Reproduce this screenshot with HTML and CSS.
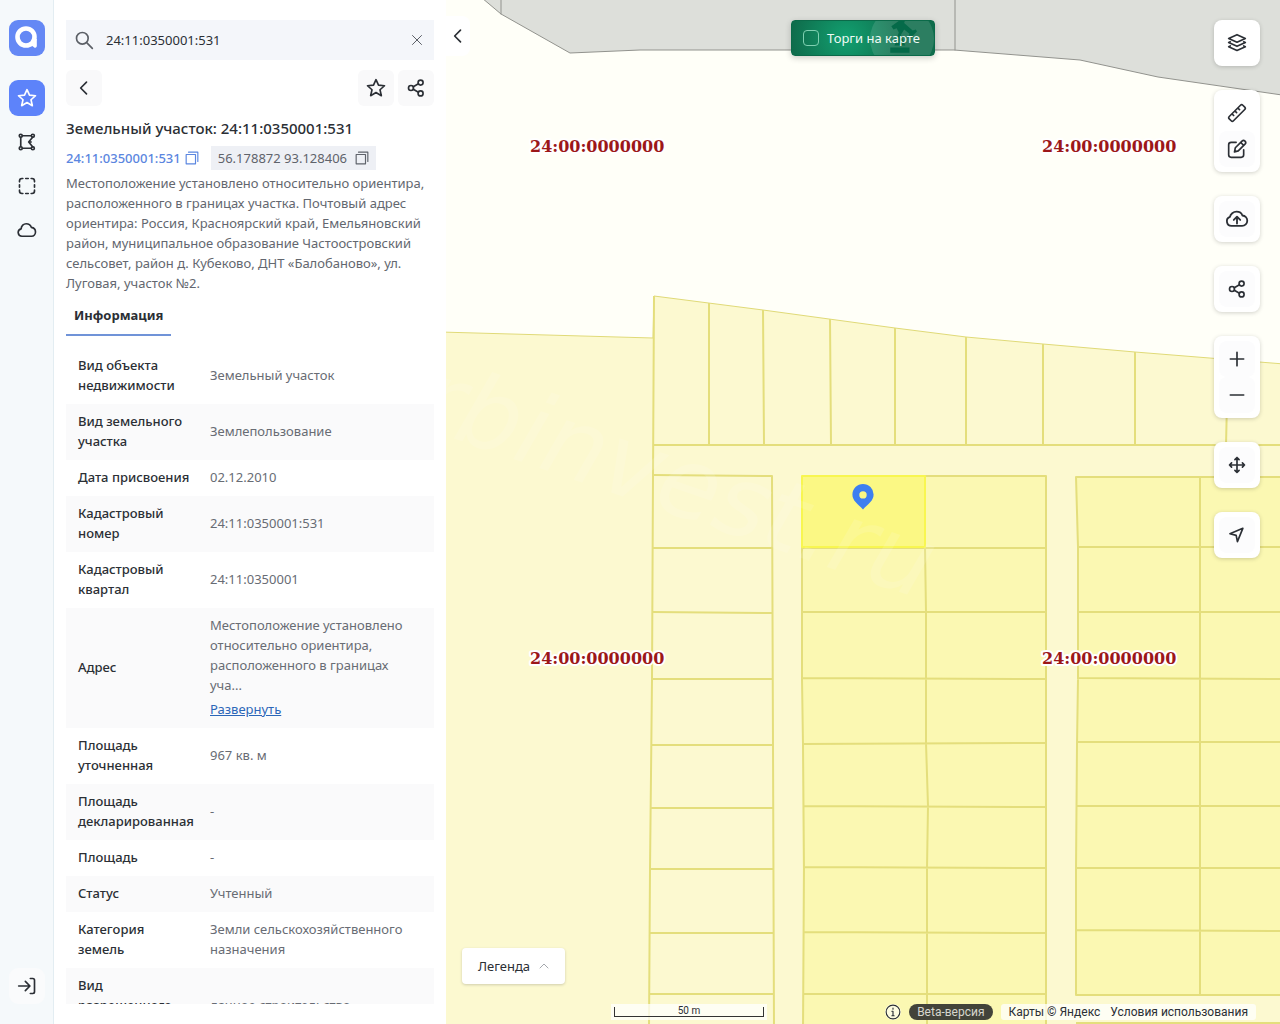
FILE: index.html
```html
<!DOCTYPE html>
<html lang="ru">
<head>
<meta charset="utf-8">
<meta name="viewport" content="width=device-width, initial-scale=1">
<title>Земельный участок: 24:11:0350001:531</title>
<link rel="stylesheet" href="styles.css">
</head>
<body>
<svg class="symbols" aria-hidden="true">
  <symbol id="i-star" viewBox="0 0 24 24"><path d="M12 2l3 6.600 7.200.700-5.400 4.800 1.600 7.100L12 17.500l-6.400 3.700 1.600-7.100-5.400-4.800 7.200-.700z"/></symbol>
  <symbol id="i-share" viewBox="0 0 24 24"><circle cx="17.500" cy="5.500" r="3"/><circle cx="6" cy="12" r="3"/><circle cx="17.500" cy="18.500" r="3"/><path d="M8.700 10.500l6.200-3.600M8.700 13.500l6.200 3.600"/></symbol>
  <symbol id="i-left" viewBox="0 0 24 24"><path d="M15 5l-7 7 7 7"/></symbol>
  <symbol id="i-copy" viewBox="0 0 24 24"><path d="M2 6h16v16H2zM6 2h16v16"/></symbol>
</svg>

<nav class="rail" aria-label="Разделы">
  <a class="logo" href="#" aria-label="Главная">
    <svg viewBox="0 0 36 36"><circle cx="17" cy="17" r="8.500" fill="none" stroke="#fff" stroke-width="4.600"/><path d="M23 19h4.800v6.800c0 1.400-.8 2-2.200 2L22 25z" fill="#fff"/></svg>
  </a>
  <button class="rail-btn active" aria-label="Избранное"><svg class="icon"><use href="#i-star"/></svg></button>
  <button class="rail-btn" aria-label="Выделить область"><svg class="icon" viewBox="0 0 24 24"><path d="M6.500 4.500h10M4.500 6.500v11M6.500 19.500h10M19 6l-5 6 5 6M15 12h2"/><circle cx="4.500" cy="4.500" r="1.800"/><circle cx="19" cy="4.500" r="1.800"/><circle cx="4.500" cy="19.500" r="1.800"/><circle cx="19" cy="19.500" r="1.800"/></svg></button>
  <button class="rail-btn" aria-label="Рамка"><svg class="icon" viewBox="0 0 24 24"><path d="M3 7V6a3 3 0 0 1 3-3h1M17 3h1a3 3 0 0 1 3 3v1M21 17v1a3 3 0 0 1-3 3h-1M7 21H6a3 3 0 0 1-3-3v-1M10.500 3h3M10.500 21h3M3 10.500v3M21 10.500v3"/></svg></button>
  <button class="rail-btn" aria-label="Облако"><svg class="icon" viewBox="0 0 24 24"><path d="M6 19.500a4.500 4.500 0 0 1-1-8.900C5 7 8 4.500 11 4.500c3 0 5.300 1.700 6.200 4.300 2.800.4 5 2.700 5 5.600a5 5 0 0 1-4.700 5.100z"/></svg></button>
  <button class="rail-btn login" aria-label="Войти"><svg class="icon" viewBox="0 0 24 24"><path d="M2 12h13M10 6.500l5.500 5.500-5.500 5.500M16 3h3a2 2 0 0 1 2 2v14a2 2 0 0 1-2 2h-3"/></svg></button>
</nav>

<aside class="panel">
  <form class="search">
    <svg class="icon lens" viewBox="0 0 24 24"><circle cx="10" cy="10" r="7"/><path d="M15.500 15.500l6.500 6.500"/></svg>
    <input type="text" aria-label="Поиск" value="24:11:0350001:531">
    <button type="button" class="clear" aria-label="Очистить"><svg viewBox="0 0 12 12"><path d="M1.500 1.500l9 9M10.500 1.500l-9 9"/></svg></button>
  </form>
  <div class="actions">
    <button class="tile" aria-label="Назад"><svg class="icon"><use href="#i-left"/></svg></button>
    <button class="tile push" aria-label="В избранное"><svg class="icon"><use href="#i-star"/></svg></button>
    <button class="tile" aria-label="Поделиться"><svg class="icon"><use href="#i-share"/></svg></button>
  </div>
  <h1>Земельный участок: 24:11:0350001:531</h1>
  <div class="codes">
    <button class="code link">24:11:0350001:531<svg><use href="#i-copy"/></svg></button>
    <button class="code coords">56.178872 93.128406<svg><use href="#i-copy"/></svg></button>
  </div>
  <p class="address">Местоположение установлено относительно ориентира, расположенного в границах участка. Почтовый адрес ориентира: Россия, Красноярский край, Емельяновский район, муниципальное образование Частоостровский сельсовет, район д. Кубеково, ДНТ «Балобаново», ул. Луговая, участок №2.</p>
  <div class="tabs" role="tablist"><button class="tab" role="tab" aria-selected="true">Информация</button></div>
  <div class="details">
    <table>
      <tbody>
        <tr><th scope="row">Вид объекта недвижимости</th><td>Земельный участок</td></tr>
        <tr><th scope="row">Вид земельного участка</th><td>Землепользование</td></tr>
        <tr><th scope="row">Дата присвоения</th><td>02.12.2010</td></tr>
        <tr><th scope="row">Кадастровый номер</th><td>24:11:0350001:531</td></tr>
        <tr><th scope="row">Кадастровый квартал</th><td>24:11:0350001</td></tr>
        <tr><th scope="row">Адрес</th><td>Местоположение установлено относительно ориентира, расположенного в границах уча...<a class="more" href="#">Развернуть</a></td></tr>
        <tr><th scope="row">Площадь уточненная</th><td>967 кв. м</td></tr>
        <tr><th scope="row">Площадь декларированная</th><td>-</td></tr>
        <tr><th scope="row">Площадь</th><td>-</td></tr>
        <tr><th scope="row">Статус</th><td>Учтенный</td></tr>
        <tr><th scope="row">Категория<br>земель</th><td>Земли сельскохозяйственного назначения</td></tr>
        <tr><th scope="row">Вид разрешенного использования</th><td>дачное строительство</td></tr>
      </tbody>
    </table>
  </div>
</aside>

<main class="map">
  <svg class="canvas" viewBox="446 0 834 1024" preserveAspectRatio="xMinYMin slice" role="img" aria-label="Кадастровая карта">
    <path class="block" d="M482-2L501 14L570 53L640 50H954L1080 60L1158 77L1282 95V-2zM501-2V14M955-2V50"/>
    <path class="land" d="M440 332L653 338L654 296L763 310L895 328L966 337L1043 344L1135 352L1284 364V1030H440z"/>
    <path class="parcels" d="M802 476H1046V1030H803zM1076 477H1284V995H1076V870L1078 679V547z"/>
    <g class="lines">
      <path d="M654 296L653 476L652 679L650 870L649 1030M653 445H1284M709 303V445M763 310L764 445M830 319L831 445M895 328V445M966 337V445M1043 344V445M1135 352V445M1228 359L1226 445"/>
      <path d="M653 475L772 476L773 745L774 1030M652 548H773M652 612L773 613M651 679H773M651 745H773M650 808H773M650 869H774M650 933H774M649 994H774"/>
      <path d="M802 476H1046V1030M802 476V679L803 745L804 870L803 1030M925 476V547L926 612V743L928 806L927 868V1030M802 548H1046M802 612H1046M802 678L1046 679M803 744L1046 743M803 806L1046 807M804 867L1046 868M803 932L1046 933M803 994H1046"/>
      <path d="M1284 477H1076L1078 547V679L1077 745L1076 870V995H1284M1200 477V995M1078 547H1284M1078 612H1284M1077 678L1284 679M1077 742H1284M1077 806H1284M1076 868H1284M1076 930L1284 931M1076 1023H1284"/>
    </g>
    <path class="selected" d="M802 476H925V547H802z"/>
    <text class="watermark" transform="translate(412 424) rotate(19)">rbinvest.ru</text>
    <g class="quarter">
      <text x="530" y="152">24:00:0000000</text><text x="1042" y="152">24:00:0000000</text>
      <text x="530" y="664">24:00:0000000</text><text x="1042" y="664">24:00:0000000</text>
    </g>
    <path class="pin" fill-rule="evenodd" d="M863 484a10.600 10.600 0 0 1 10.600 10.600c0 6.200-5 9-10.600 14.800c-5.600-5.800-10.600-8.600-10.600-14.800A10.600 10.600 0 0 1 863 484zm0 7.200a3.700 3.700 0 1 0 0 7.400a3.700 3.700 0 1 0 0-7.400z"/>
  </svg>

  <button class="collapse" aria-label="Свернуть панель"><svg class="icon"><use href="#i-left"/></svg></button>

  <label class="auction">
    <input type="checkbox">
    <span>Торги на карте</span>
    <svg class="gavel" viewBox="0 0 60 60" aria-hidden="true"><circle cx="30" cy="30" r="30" fill="#fff" fill-opacity=".12"/><path d="M19 38h18v5H19zM20 18l10-7 3 1-1 3 8 7 3-1 1 2-6 6-2-1 1-3-5-4-3 5 4 10H23l4-12-2-4-3 1z" fill="#056a49"/></svg>
  </label>

  <div class="tools">
    <div class="card"><button aria-label="Слои"><svg class="icon" viewBox="0 0 24 24"><path d="M12 2l10 4.500-10 4.500L2 6.500zM4 10.500l-2 1L12 16l10-4.500-2-1M4 15.500l-2 1L12 21l10-4.500-2-1"/></svg></button></div>
    <div class="card">
      <button aria-label="Линейка"><svg class="icon" viewBox="0 0 24 24"><path d="M2.700 16.200L16.200 2.700a2 2 0 0 1 2.800 0L21.300 5a2 2 0 0 1 0 2.800L7.800 21.300a2 2 0 0 1-2.800 0L2.700 19a2 2 0 0 1 0-2.800zM6 13l2 2M9.500 9.500l2 2M13 6l2 2"/></svg></button>
      <button class="soft" aria-label="Рисовать"><svg class="icon" viewBox="0 0 24 24"><path d="M11 4H5a3 3 0 0 0-3 3v12a3 3 0 0 0 3 3h12a3 3 0 0 0 3-3v-6M9 15.500l1-5L18 2.600a2.500 2.500 0 0 1 3.600 3.600L13.500 14.300zM16.500 4.200l3.500 3.500"/></svg></button>
    </div>
    <div class="card"><button class="soft" aria-label="Загрузить"><svg class="icon wide" viewBox="0 0 26 24"><path d="M7 19.500a5 5 0 0 1-1.700-9.700C5.800 6.500 9 4 12.500 4c3 0 5.500 1.600 6.400 4.200 3 .3 5.300 2.600 5.300 5.600a5.700 5.700 0 0 1-5.700 5.700zM13 17v-7M9.500 13L13 9.500l3.500 3.500"/></svg></button></div>
    <div class="card"><button class="soft" aria-label="Поделиться"><svg class="icon"><use href="#i-share"/></svg></button></div>
    <div class="card">
      <button class="soft" aria-label="Приблизить"><svg class="icon" viewBox="0 0 24 24"><path d="M12 4v16M4 12h16"/></svg></button>
      <button class="soft" aria-label="Отдалить"><svg class="icon" viewBox="0 0 24 24"><path d="M4 12h16"/></svg></button>
    </div>
    <div class="card"><button class="soft" aria-label="Переместить"><svg class="icon" viewBox="0 0 24 24"><path d="M12 3v18M3 12h18M9.500 5.500L12 3l2.500 2.500M9.500 18.500L12 21l2.500-2.500M5.500 9.500L3 12l2.500 2.500M18.500 9.500L21 12l-2.500 2.500"/></svg></button></div>
    <div class="card"><button class="soft" aria-label="Моё местоположение"><svg class="icon" viewBox="0 0 24 24"><path d="M19 4L3.500 10.500l7.500 2L12.500 20z"/></svg></button></div>
  </div>

  <button class="legend">Легенда<svg viewBox="0 0 10 6"><path d="M1 5l4-4 4 4"/></svg></button>

  <footer class="bar">
    <div class="scale">50 m</div>
    <svg class="info" viewBox="0 0 14 14"><circle cx="7" cy="7" r="6"/><path d="M7 3.500v1M6 6.300h1v4M6 10.300h2"/></svg>
    <span class="beta">Beta-версия</span>
    <div class="credits"><a href="#">Карты © Яндекс</a><a href="#">Условия использования</a></div>
  </footer>
</main>
</body>
</html>
```
FILE: styles.css
```css
* { box-sizing: border-box; }
body {
  margin: 0;
  height: 100vh;
  display: flex;
  overflow: hidden;
  background: #fff;
  color: #2b2f35;
  font: 13px/20px "Noto Sans", sans-serif;
}
button, input { font: inherit; color: inherit; }
button { border: 0; padding: 0; background: none; cursor: pointer; }
a { color: inherit; text-decoration: none; }
svg { fill: none; stroke: currentColor; stroke-width: 2; stroke-linecap: round; stroke-linejoin: round; flex: none; }
.symbols { position: absolute; width: 0; height: 0; }
.icon { width: 20px; height: 20px; display: block; }

.rail {
  flex: 0 0 54px;
  display: flex;
  flex-direction: column;
  align-items: center;
  gap: 8px;
  padding: 20px 0;
  background: #f5f9fb;
  border-right: 1px solid #e3edf2;
}
.logo { width: 36px; height: 36px; margin-bottom: 16px; border-radius: 9px; background: #6488f5; }
.logo svg { display: block; stroke: none; }
.rail-btn { width: 36px; height: 36px; display: grid; place-items: center; border-radius: 9px; }
.rail-btn.active { background: #5d83fa; color: #fff; }
.rail-btn.login { margin-top: auto; background: #fafbfc; }

.panel {
  flex: 0 0 392px;
  display: flex;
  flex-direction: column;
  padding: 20px 12px;
  background: #fff;
}
.search { display: flex; align-items: center; gap: 12px; height: 40px; padding: 0 8px; background: #f4f6fa; flex: none; }
.search .lens { color: #5b5f66; }
.search input { flex: 1; min-width: 0; padding: 0; border: 0; outline: 0; background: none; }
.clear { width: 18px; height: 18px; display: grid; place-items: center; color: #5b5f66; }
.clear svg { width: 12px; height: 12px; stroke-width: 1; }
.actions { display: flex; gap: 4px; margin: 10px 0 11px; }
.tile { width: 36px; height: 36px; display: grid; place-items: center; border-radius: 6px; background: #f9f9fa; }
.tile.push { margin-left: auto; }
h1 { margin: 0; font-size: 15px; line-height: 22px; font-weight: 500; white-space: nowrap; }
.codes { display: flex; gap: 12px; margin: 7px 0 3px; }
.code { display: flex; align-items: center; gap: 4px; height: 24px; white-space: nowrap; }
.code svg { width: 14px; height: 14px; }
.link { color: #5b86e0; font-weight: 500; }
.coords { gap: 8px; padding: 0 7px; background: #eef0f5; color: #5f636b; }
.address { margin: 0; color: #63676f; }
.tabs { display: flex; margin: 3px 0 12px; }
.tab { height: 40px; padding: 0 8px; border-bottom: 2px solid #7093d8; font-weight: 700; }
.details { flex: 1; min-height: 0; overflow: hidden; }
table { width: 100%; border-collapse: collapse; table-layout: fixed; }
tr:nth-child(even) { background: #fafafb; }
th, td { padding: 7px 12px 9px; text-align: left; vertical-align: middle; }
th { width: 132px; padding-right: 0; font-weight: 500; }
td { color: #686c74; }
.more { display: block; margin-top: 4px; color: #2b66b8; text-decoration: underline; }

.map { flex: 1; min-width: 0; position: relative; overflow: hidden; background: #fffff8; }
.canvas { position: absolute; inset: 0; width: 100%; height: 100%; stroke: none; }
.block { fill: #dddfda; stroke: #92938e; stroke-width: 1; }
.land { fill: #fcf9d0; stroke: #e0da78; stroke-width: 1; }
.parcels { fill: #fbf8b2; }
.lines { stroke: #e4de7c; stroke-width: 2; stroke-linecap: butt; }
.selected { fill: #fbf884; stroke: #f8f650; stroke-width: 2; }
.watermark { fill: #fff; fill-opacity: .12; font: italic 99px "DejaVu Sans", sans-serif; }
.quarter { fill: #9c1719; stroke: #fff; stroke-width: 4; paint-order: stroke; font: bold 16px "DejaVu Serif", serif; }
.pin { fill: #3d7ff0; }

.collapse {
  position: absolute; top: 16px; left: 0;
  width: 24px; height: 40px;
  display: grid; place-items: center;
  border-radius: 0 8px 8px 0;
  background: #fff;
}
.auction {
  position: absolute; top: 20px; left: 50%;
  transform: translateX(-50%);
  width: 144px; height: 36px;
  display: flex; align-items: center; gap: 8px;
  padding: 0 11px;
  overflow: hidden;
  border-radius: 4px;
  border: 1px solid #0b6a49;
  background: radial-gradient(circle at 38% 50%, #12a070, #0f6d4c 60%);
  box-shadow: 0 2px 6px rgb(0 0 0 / 20%);
  color: #effaf5;
  white-space: nowrap;
}
.auction input { appearance: none; flex: none; width: 16px; height: 16px; margin: 0; border: 1px solid #7fd0b1; border-radius: 4px; }
.auction span { position: relative; z-index: 1; }
.gavel { position: absolute; top: -14px; right: 0; width: 64px; height: 64px; stroke: none; }

.tools { position: absolute; top: 20px; right: 20px; display: flex; flex-direction: column; gap: 24px; }
.card { padding: 5px; border-radius: 8px; background: #fff; box-shadow: 0 1px 4px rgb(0 0 0 / 18%); }
.card button { display: grid; place-items: center; width: 36px; height: 36px; border-radius: 8px; }
.card .soft { background: #fcfcfd; }
.icon.wide { width: 24px; height: 22px; }

.legend {
  position: absolute; left: 16px; bottom: 40px;
  display: flex; align-items: center; gap: 9px;
  height: 36px; padding: 0 16px;
  border-radius: 4px; background: #fff;
  box-shadow: 0 1px 3px rgb(0 0 0 / 18%);
}
.legend svg { width: 10px; height: 6px; stroke: #a5a8ad; stroke-width: 1; }

.bar {
  position: absolute; right: 24px; bottom: 4px; left: 165px;
  display: flex; align-items: center; gap: 8px;
  font: 12px/16px Roboto, sans-serif;
}
.scale {
  width: 156px; height: 16px; margin-right: auto;
  position: relative;
  background: rgb(255 255 255 / 75%);
  font-size: 10px; line-height: 14px; text-align: center;
}
.scale::after { content: ""; position: absolute; inset: 3px 3px 3px; border: 1px solid #333; border-top: 0; }
.info { width: 16px; height: 16px; stroke-width: 1; background: rgb(255 255 255 / 60%); border-radius: 8px; }
.beta { padding: 0 8px; border-radius: 8px; background: #42433a; color: #d6d6cd; }
.credits { display: flex; gap: 10px; padding: 0 8px; border-radius: 3px; background: rgb(255 255 255 / 75%); white-space: nowrap; }
```
